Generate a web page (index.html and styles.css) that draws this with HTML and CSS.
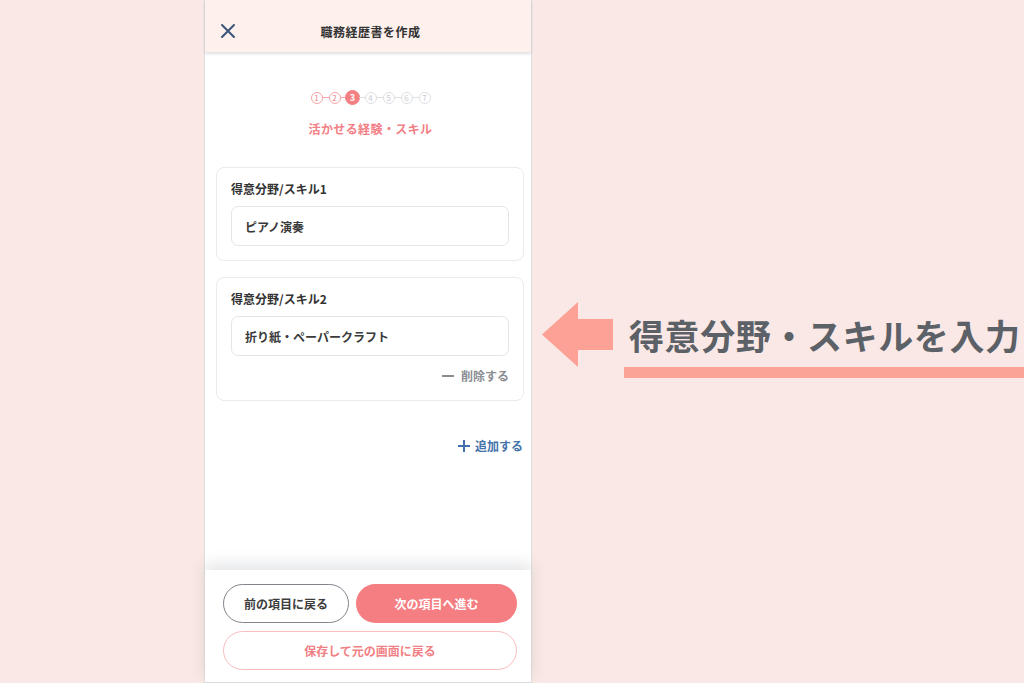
FILE: index.html
```html
<!DOCTYPE html>
<html lang="ja">
<head>
<meta charset="utf-8">
<link rel="stylesheet" href="styles.css">
</head>
<body>
<div class="page">
  <div class="phone">
    <header class="header">
      <svg class="close" width="16" height="16" viewBox="0 0 16 16"><path d="M2 2L14 14M14 2L2 14" stroke="#3b5578" stroke-width="2" stroke-linecap="round"/></svg>
      <div class="title">職務経歴書を作成</div>
    </header>
    <main class="content">
      <div class="steps">
        <span class="step done">1</span><span class="line done"></span>
        <span class="step done">2</span><span class="line done"></span>
        <span class="step active">3</span><span class="line"></span>
        <span class="step">4</span><span class="line"></span>
        <span class="step">5</span><span class="line"></span>
        <span class="step">6</span><span class="line"></span>
        <span class="step">7</span>
      </div>
      <div class="section-title">活かせる経験・スキル</div>
      <div class="card">
        <div class="label">得意分野/スキル1</div>
        <div class="input">ピアノ演奏</div>
      </div>
      <div class="card card2">
        <div class="label">得意分野/スキル2</div>
        <div class="input">折り紙・ペーパークラフト</div>
        <div class="delete"><span class="minus"></span>削除する</div>
      </div>
      <div class="add">
        <svg width="12" height="12" viewBox="0 0 12 12"><path d="M6 0V12M0 6H12" stroke="#3f6fae" stroke-width="2"/></svg>
        <span>追加する</span>
      </div>
    </main>
    <footer class="footer">
      <div class="btn-row">
        <div class="btn btn-back">前の項目に戻る</div>
        <div class="btn btn-next">次の項目へ進む</div>
      </div>
      <div class="btn btn-save">保存して元の画面に戻る</div>
    </footer>
  </div>
  <div class="callout">
    <div class="callout-row">
      <svg class="arrow" width="72" height="65" viewBox="0 0 72 65"><polygon points="0,32.5 36,0 36,17 71,17 71,48 36,48 36,65" fill="#fda196"/></svg>
      <div class="callout-text">得意分野・スキルを入力</div>
    </div>
    <div class="callout-bar"></div>
  </div>
</div>
</body>
</html>
```
FILE: styles.css
```css
* { box-sizing: border-box; }
html, body { margin: 0; padding: 0; }
body {
  background: #f9e8e5;
  font-family: "Noto Sans CJK JP", "Noto Sans", sans-serif;
  width: 1024px;
  height: 683px;
  overflow: hidden;
}
.page {
  display: flex;
  height: 683px;
  padding-left: 204px;
}
.phone {
  width: 328px;
  height: 683px;
  border: 1px solid #dedede;
  border-top: none;
  background: #fff;
  display: flex;
  flex-direction: column;
  flex: none;
}
.header {
  height: 52px;
  flex: none;
  background: #fdf0ed;
  display: flex;
  align-items: center;
  padding-left: 15px;
  box-shadow: 0 2px 3px rgba(0,0,0,0.13);
  position: relative;
  z-index: 1;
  padding-top: 10px;
}
.close { flex: none; }
.title {
  flex: 1;
  text-align: center;
  font-size: 12px;
  font-weight: 700;
  letter-spacing: 0.5px;
  color: #333;
  margin-right: 26px;
}
.content {
  flex: 1;
  padding: 38px 7px 0 11px;
  display: flex;
  flex-direction: column;
  overflow: hidden;
}
.steps {
  display: flex;
  align-items: center;
  justify-content: center;
  height: 15px;
  margin-left: 1px;
}
.step {
  width: 12px;
  height: 12px;
  border-radius: 50%;
  border: 1.3px solid #dedfe3;
  color: #c9cad0;
  font-size: 8px;
  line-height: 9.5px;
  text-align: center;
  font-weight: 400;
}
.step.done { border-color: #f7a4a8; color: #f08287; }
.step.active {
  width: 15px; height: 15px;
  margin: 0 -1.5px;
  background: #f47f83;
  border-color: #f47f83;
  color: #fff;
  font-weight: 700;
  font-size: 9px;
  line-height: 13px;
}
.line { width: 6px; height: 1.3px; background: #dedfe3; }
.line.done { background: #f7a4a8; }
.section-title {
  margin-top: 15px;
  text-align: center;
  font-size: 12px;
  line-height: 17px;
  font-weight: 700;
  letter-spacing: 0.4px;
  color: #f28086;
  margin-left: 1px;
}
.card {
  margin-top: 30px;
  border: 1px solid #ebebeb;
  border-radius: 8px;
  padding: 12px 14px 14px;
  display: flex;
  flex-direction: column;
}
.card2 { margin-top: 16px; padding-bottom: 16px; }
.label {
  font-size: 12px;
  line-height: 17px;
  font-weight: 700;
  color: #333;
}
.input {
  margin-top: 9px;
  height: 40px;
  border: 1px solid #e5e5e5;
  border-radius: 7px;
  padding-left: 13px;
  display: flex;
  align-items: center;
  font-size: 12px;
  font-weight: 700;
  color: #3a3a3a;
}
.delete {
  margin-top: 11px;
  align-self: flex-end;
  display: flex;
  align-items: center;
  gap: 7px;
  font-size: 12px;
  line-height: 17px;
  font-weight: 700;
  color: #8a8d92;
}
.minus { width: 12px; height: 2px; background: #8a8d92; }
.add {
  margin-top: 36px;
  margin-right: 1px;
  align-self: flex-end;
  display: flex;
  align-items: center;
  gap: 5px;
  font-size: 12px;
  line-height: 17px;
  font-weight: 700;
  color: #4573aa;
}
.footer {
  flex: none;
  height: 112px;
  padding: 14px 14px 0 18px;
  background: #fff;
  box-shadow: 0 -6px 14px rgba(120,125,135,0.2);
  position: relative;
  display: flex;
  flex-direction: column;
  gap: 8px;
}
.btn-row { display: flex; gap: 7px; }
.btn {
  height: 39px;
  border-radius: 20px;
  display: flex;
  align-items: center;
  justify-content: center;
  font-size: 12px;
  font-weight: 700;
}
.btn-back {
  width: 126px;
  border: 1.5px solid #80858c;
  color: #3c3c3c;
}
.btn-next {
  flex: 1;
  background: #f47e82;
  color: #fff;
}
.btn-save {
  border: 1.5px solid #fbbcbd;
  color: #f17f84;
}
.callout {
  margin-left: 10px;
  padding-top: 302px;
  display: flex;
  flex-direction: column;
  flex: 1;
}
.callout-row {
  display: flex;
  align-items: center;
  gap: 15px;
}
.arrow { flex: none; }
.callout-text {
  font-size: 35px;
  font-weight: 700;
  color: #5c6067;
  letter-spacing: 0.6px;
  white-space: nowrap;
  line-height: 50px;
}
.callout-bar {
  margin-top: 0;
  margin-left: 82px;
  height: 11px;
  background: #fca398;
}
```
